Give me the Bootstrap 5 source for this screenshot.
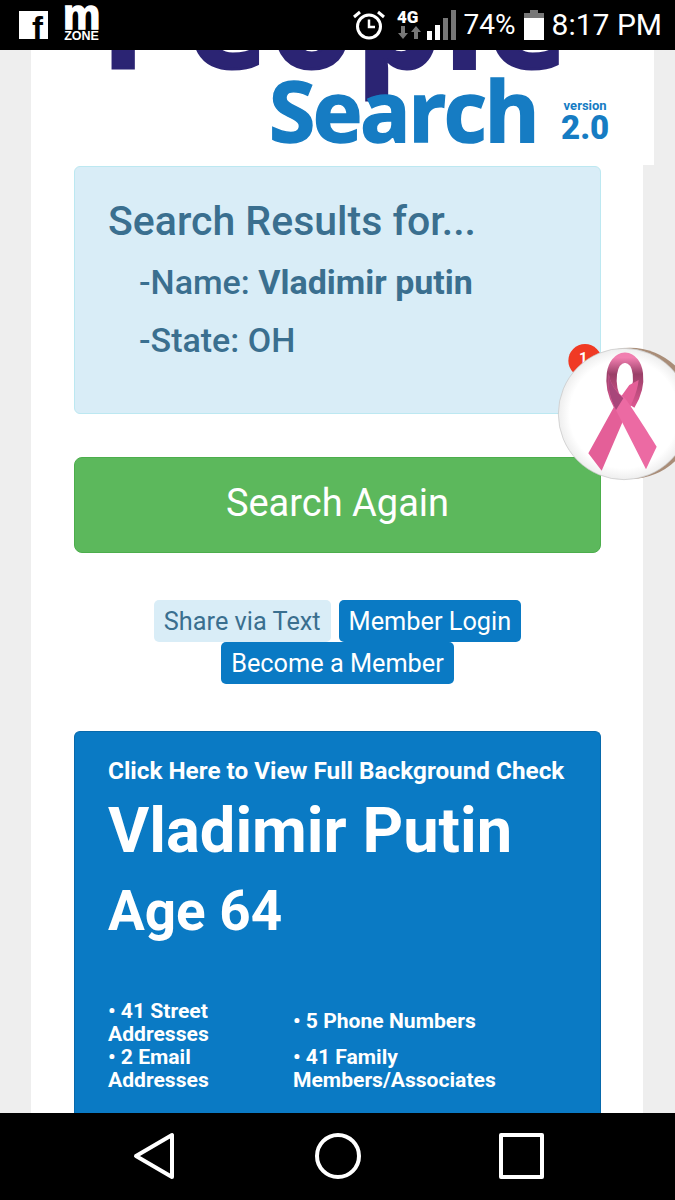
<!DOCTYPE html>
<html lang="en">
<head>
    <meta charset="UTF-8">
    <meta name="viewport" content="width=device-width, initial-scale=1.0">
    <title>People Search</title>
    <link href="https://cdn.jsdelivr.net/npm/bootstrap@5.3.0/dist/css/bootstrap.min.css" rel="stylesheet">
    <style>
        html, body { height: 100%; overflow: hidden; }
        body { background: #eeeeee; font-family: Roboto, "Liberation Sans", sans-serif; }
        .phone { width: 675px; height: 1200px; position: relative; overflow: hidden; }
        .status-bar { height: 50px; background: #000; color: #fff; padding: 0 13px 0 19px; }
        .fb-box { width: 29px; height: 28px; background: #fff; color: #000; font: 700 33px/28px "Liberation Sans", sans-serif; text-align: right; padding-right: 5px; overflow: hidden; padding-top: 4px; }
        .mzone { width: 37px; margin-left: 15px; text-align: center; line-height: 1; }
        .mzone-m { font: 700 42px/22px "Liberation Sans", sans-serif; display: block; height: 22px; margin-top: -4px; -webkit-text-stroke: 1.5px #fff; }
        .mzone-z { font: 700 12.5px/12px "Liberation Sans", sans-serif; display: block; margin-top: 4px; }
        .status-text { font-size: 30px; line-height: 50px; }
        .status-pct { font-size: 28px; }
        .page-scroll { height: 1063px; overflow: hidden; }
        .logo-area { width: 623px; height: 115px; margin-left: 31px; background: #fff; position: relative; overflow: hidden; }
        .logo-people { position: absolute; left: 70px; top: -101px; font: 700 134px/134px "Open Sans", sans-serif; color: #2b2473; letter-spacing: 3px; white-space: nowrap; -webkit-text-stroke: 3px #2b2473; }
        .logo-search { position: absolute; left: 238px; top: 18px; font: 700 84px/84px "Open Sans", sans-serif; color: #167cc3; letter-spacing: -2.5px; -webkit-text-stroke: 1.5px #167cc3; }
        .logo-ver { position: absolute; left: 530px; top: 49px; color: #167cc3; text-align: center; font-weight: 700; }
        .logo-ver span { display: block; font-size: 13px; line-height: 14px; }
        .logo-ver b { display: block; font-size: 33px; line-height: 30px; }
        .content-wrap { width: 612px; margin-left: 31px; background: #fff; padding: 1px 42px 0 43px; min-height: 950px; }
        .results-box { background: #d9edf7; border: 1px solid #bce8f1; color: #3a6f8f; border-radius: 6px; height: 248px; padding: 29px 33px 0 33px; margin: 0 0 43px; }
        .results-title { font-size: 41px; font-weight: 500; line-height: 50px; margin: 0 0 7px; }
        .results-line { font-size: 34px; font-weight: 500; line-height: 58px; padding-left: 31px; }
        .again-btn { height: 96px; font-size: 38px; border-radius: 8px; background: #5cb85c; border: 1px solid #4cae4c; color: #fff; margin-bottom: 47px; padding: 0 0 4px; }
        .mini-btn { font-size: 25.3px; line-height: 34px; padding: 5px 10px 3px; border-radius: 5px; border: 0; margin: 0 2px; vertical-align: top; }
        .mini-share { background: #d9edf7; color: #3a6f8f; }
        .mini-blue { background: #0a7ac4; color: #fff; }
        .mini-wrap { line-height: 42px; margin-bottom: 47px; }
        .person-box { background: #0a7ac4; border: 1px solid #0869ab; border-bottom: 0; border-radius: 6px 6px 0 0; color: #fff; padding: 23px 33px 40px 33px; }
        .person-link { font-size: 24.3px; font-weight: 700; line-height: 32px; white-space: nowrap; }
        .person-name { font-size: 63.2px; font-weight: 700; line-height: 72px; margin: 7px 0 0; }
        .person-age { font-size: 54.8px; font-weight: 700; line-height: 60px; margin: 15px 0 58px; }
        .stat-left { width: 185px; padding-right: 50px; }
        .stat-cell { font-size: 21.1px; font-weight: 700; line-height: 23px; }
        .stat-up { margin-top: -4px; }
        .nav-bar { height: 87px; background: #000; }
        .ribbon-layer { position: absolute; left: 540px; top: 330px; width: 135px; height: 160px; }
    </style>
</head>
<body>
<div class="phone d-flex flex-column">
    <!-- android status bar -->
    <div class="status-bar d-flex align-items-center">
        <div class="fb-box">f</div>
        <div class="mzone"><span class="mzone-m">m</span><span class="mzone-z">ZONE</span></div>
        <div class="ms-auto d-flex align-items-center">
            <svg width="34" height="30" viewBox="0 0 34 30" fill="none" stroke="#fff">
                <circle cx="17" cy="16.5" r="11.5" stroke-width="3"/>
                <path d="M17 9.5v7.5h6" stroke-width="2.5"/>
                <path d="M2 7l6-5M32 7l-6-5" stroke-width="3"/>
            </svg>
            <svg class="ms-2" width="28" height="30" viewBox="0 0 28 30">
                <text x="3" y="13" fill="#fff" font-family="Roboto, sans-serif" font-size="17" font-weight="900">4G</text>
                <path d="M11 16v7h3l-5 6-5-6h3v-7zM20 29v-7h-3l5-6 5 6h-3v7z" fill="#777"/>
            </svg>
            <svg class="ms-1" width="34" height="32" viewBox="0 0 34 32">
                <rect x="1" y="22" width="5" height="9" fill="#fff"/>
                <rect x="9" y="16" width="5" height="15" fill="#fff"/>
                <rect x="17" y="9" width="5" height="22" fill="#777"/>
                <rect x="25" y="1" width="5" height="30" fill="#777"/>
            </svg>
            <span class="status-text status-pct ms-1">74%</span>
            <svg class="ms-2" width="20" height="30" viewBox="0 0 20 30">
                <path d="M6 0h8v3h6v5H0V3h6z" fill="#777"/>
                <rect y="8" width="20" height="22" fill="#fff"/>
            </svg>
            <span class="status-text ms-2">8:17 PM</span>
        </div>
    </div>

    <div class="page-scroll">
        <div class="logo-area">
            <div class="logo-people">People</div>
            <div class="logo-search">Search</div>
            <div class="logo-ver"><span>version</span><b>2.0</b></div>
        </div>

        <div class="content-wrap">
            <div class="alert results-box" role="alert">
                <h2 class="results-title">Search Results for...</h2>
                <div class="results-line">-Name: <strong>Vladimir putin</strong></div>
                <div class="results-line">-State: OH</div>
            </div>

            <a href="#" class="btn again-btn w-100 d-flex align-items-center justify-content-center">Search Again</a>

            <div class="mini-wrap text-center">
                <a href="#" class="btn mini-btn mini-share">Share via Text</a>
                <a href="#" class="btn mini-btn mini-blue">Member Login</a>
                <br>
                <a href="#" class="btn mini-btn mini-blue">Become a Member</a>
            </div>

            <div class="person-box">
                <div class="person-link">Click Here to View Full Background Check</div>
                <h1 class="person-name">Vladimir Putin</h1>
                <h2 class="person-age">Age 64</h2>
                <div class="d-flex align-items-center stat-cell">
                    <div class="stat-left">• 41 Street Addresses</div>
                    <div class="stat-up">• 5 Phone Numbers</div>
                </div>
                <div class="d-flex align-items-center stat-cell">
                    <div class="stat-left">• 2 Email Addresses</div>
                    <div>• 41 Family<br>Members/Associates</div>
                </div>
            </div>
        </div>
    </div>

    <!-- android nav buttons -->
    <div class="nav-bar d-flex align-items-center">
        <svg width="675" height="87" viewBox="0 0 675 87" fill="none" stroke="#fff" stroke-width="4" stroke-linejoin="round">
            <path d="M172 22v42L136 43z"/>
            <circle cx="338" cy="43" r="21"/>
            <rect x="501" y="22" width="41" height="42"/>
        </svg>
    </div>

    <!-- floating ribbon bubble -->
    <div class="ribbon-layer">
        <svg width="135" height="160" viewBox="0 0 405 480">
            <defs>
                <radialGradient id="bubble" cx="50%" cy="50%" r="55%">
                    <stop offset="0.75" stop-color="#ffffff"/>
                    <stop offset="1" stop-color="#e4e4e4"/>
                </radialGradient>
                <linearGradient id="loop" x1="0" y1="0" x2="0" y2="1">
                    <stop offset="0" stop-color="#f17fb0"/>
                    <stop offset="0.35" stop-color="#9a4068"/>
                    <stop offset="1" stop-color="#d9568f"/>
                </linearGradient>
            </defs>
            <circle cx="135" cy="92" r="50" fill="#f03a24"/>
            <text x="130" y="100" fill="#fff" font-family="Roboto, sans-serif" font-size="44" font-weight="700" text-anchor="middle">1</text>
            <circle cx="270" cy="250" r="197" fill="#a98d78"/>
            <circle cx="252" cy="252" r="197" fill="url(#bubble)" stroke="#c4c4c4" stroke-width="2"/>
            <path d="M235 225C200 160 212 86 255 83C298 86 310 160 270 225" fill="none" stroke="url(#loop)" stroke-width="31"/>
            <path d="M268 165L296 150C292 190 270 235 248 275L185 422L145 370L225 225z" fill="#e45f98"/>
            <path d="M206 130C212 170 230 185 255 205C270 225 310 285 350 350L318 418L225 235C210 205 202 170 206 130z" fill="#ec6aa3"/>
            <path d="M206 130C212 165 225 180 250 205L228 240C210 205 202 170 206 130z" fill="#a8467a"/>
        </svg>
    </div>
</div>
<script src="https://cdn.jsdelivr.net/npm/bootstrap@5.3.0/dist/js/bootstrap.bundle.min.js"></script>
</body>
</html>
